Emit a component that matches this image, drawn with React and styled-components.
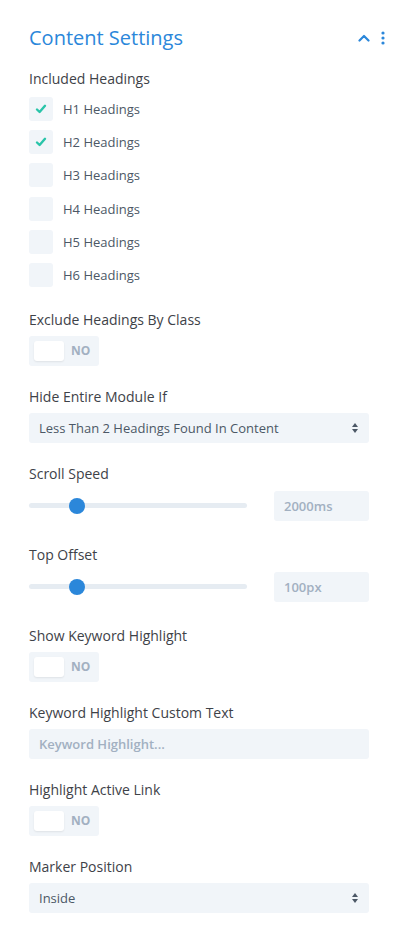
import React from "react";
import styled, { createGlobalStyle } from "styled-components";

const GlobalStyle = createGlobalStyle`
  body {
    margin: 0;
    background: #fff;
    font-family: "Open Sans", "Noto Sans", sans-serif;
  }
`;

const Panel = styled.div`
  width: 399px;
  box-sizing: border-box;
  padding: 24px 30px 24px 29px;
`;

const Header = styled.div`
  display: flex;
  align-items: center;
  justify-content: space-between;
  height: 28px;
  margin-bottom: 17px;
`;

const Title = styled.h2`
  margin: 0;
  font-size: 20px;
  font-weight: 400;
  line-height: 28px;
  color: #2b87da;
`;

const HeaderTools = styled.div`
  display: flex;
  align-items: center;
  gap: 11px;
  margin-right: -16px;
  color: #2b87da;
`;

const Field = styled.div`
  margin-bottom: ${props => (props.$gap ? props.$gap : 21)}px;
`;

const Label = styled.div`
  font-size: 14px;
  line-height: 20px;
  color: #3e4248;
  margin-bottom: ${props => (props.$mb !== undefined ? props.$mb : 6)}px;
`;

const CheckList = styled.div`
  display: flex;
  flex-direction: column;
  gap: 9.2px;
  margin-top: 8px;
`;

const CheckRow = styled.div`
  display: flex;
  align-items: center;
  gap: 10px;
  height: 24px;
`;

const Box = styled.div`
  width: 24px;
  height: 24px;
  border-radius: 3px;
  background: #f1f5f9;
  display: flex;
  align-items: center;
  justify-content: center;
`;

const CheckLabel = styled.span`
  font-size: 13px;
  color: #4c5866;
`;

const Toggle = styled.div`
  width: 70px;
  height: 30px;
  box-sizing: border-box;
  padding: 5px;
  border-radius: 3px;
  background: #f1f5f9;
  display: flex;
  align-items: center;
  gap: 7px;
`;

const Knob = styled.div`
  width: 30px;
  height: 20px;
  border-radius: 3px;
  background: #fff;
  box-shadow: 0 1px 2px rgba(0, 0, 0, 0.08);
`;

const ToggleText = styled.span`
  font-size: 12px;
  font-weight: 700;
  color: #a2b0c1;
`;

const Select = styled.div`
  height: 30px;
  box-sizing: border-box;
  padding: 0 10px;
  border-radius: 3px;
  background: #f1f5f9;
  display: flex;
  align-items: center;
  justify-content: space-between;
  font-size: 13px;
  color: #4c5866;
`;

const TextInput = styled.div`
  height: 30px;
  box-sizing: border-box;
  padding: 0 10px;
  border-radius: 3px;
  background: #f1f5f9;
  display: flex;
  align-items: center;
  font-size: 13px;
  font-weight: 600;
  color: #a2b0c1;
`;

const SliderRow = styled.div`
  display: flex;
  align-items: center;
  justify-content: space-between;
  padding: 1px 0 3px;
`;

const Track = styled.div`
  position: relative;
  width: 218px;
  height: 5px;
  border-radius: 3px;
  background: #e6ecf2;
`;

const Thumb = styled.div`
  position: absolute;
  top: 50%;
  width: 16px;
  height: 16px;
  margin: -8px 0 0 -8px;
  border-radius: 50%;
  background: #2b87da;
`;

const ValueBox = styled(TextInput)`
  width: 95px;
`;

const Check = () => (
  <svg width="12" height="10" viewBox="0 0 12 10">
    <path d="M2 5.5 L4.6 8 L10 1.8" fill="none" stroke="#29c4a9" strokeWidth="2.4" strokeLinecap="round" strokeLinejoin="round" />
  </svg>
);

const Arrows = () => (
  <svg width="8" height="12" viewBox="0 0 8 12">
    <path d="M4 1 L7 5 L1 5 Z" fill="#4c5866" />
    <path d="M4 11 L7 7 L1 7 Z" fill="#4c5866" />
  </svg>
);

const ToggleField = ({ label }) => (
  <Field>
    <Label>{label}</Label>
    <Toggle>
      <Knob />
      <ToggleText>NO</ToggleText>
    </Toggle>
  </Field>
);

const SliderField = ({ label, value, pos }) => (
  <Field>
    <Label>{label}</Label>
    <SliderRow>
      <Track>
        <Thumb style={{ left: `${pos}%` }} />
      </Track>
      <ValueBox>{value}</ValueBox>
    </SliderRow>
  </Field>
);

const headings = [
  { name: "H1 Headings", on: true },
  { name: "H2 Headings", on: true },
  { name: "H3 Headings", on: false },
  { name: "H4 Headings", on: false },
  { name: "H5 Headings", on: false },
  { name: "H6 Headings", on: false },
];

export default function App() {
  return (
    <>
      <GlobalStyle />
      <Panel>
        <Header>
          <Title>Content Settings</Title>
          <HeaderTools>
            <svg width="12" height="8" viewBox="0 0 12 8">
              <path d="M1.5 6.5 L6 2 L10.5 6.5" fill="none" stroke="#2b87da" strokeWidth="2.2" strokeLinecap="round" strokeLinejoin="round" />
            </svg>
            <svg width="4" height="14" viewBox="0 0 4 14">
              <circle cx="2" cy="2" r="1.6" fill="#2b87da" />
              <circle cx="2" cy="7" r="1.6" fill="#2b87da" />
              <circle cx="2" cy="12" r="1.6" fill="#2b87da" />
            </svg>
          </HeaderTools>
        </Header>

        <Field $gap={23}>
          <Label $mb={0}>Included Headings</Label>
          <CheckList>
            {headings.map(h => (
              <CheckRow key={h.name}>
                <Box>{h.on && <Check />}</Box>
                <CheckLabel>{h.name}</CheckLabel>
              </CheckRow>
            ))}
          </CheckList>
        </Field>

        <ToggleField label="Exclude Headings By Class" />

        <Field>
          <Label>Hide Entire Module If</Label>
          <Select>
            <span>Less Than 2 Headings Found In Content</span>
            <Arrows />
          </Select>
        </Field>

        <SliderField label="Scroll Speed" value="2000ms" pos={22} />
        <SliderField label="Top Offset" value="100px" pos={22} />

        <ToggleField label="Show Keyword Highlight" />

        <Field>
          <Label>Keyword Highlight Custom Text</Label>
          <TextInput>Keyword Highlight...</TextInput>
        </Field>

        <ToggleField label="Highlight Active Link" />

        <Field>
          <Label>Marker Position</Label>
          <Select>
            <span>Inside</span>
            <Arrows />
          </Select>
        </Field>
      </Panel>
    </>
  );
}
